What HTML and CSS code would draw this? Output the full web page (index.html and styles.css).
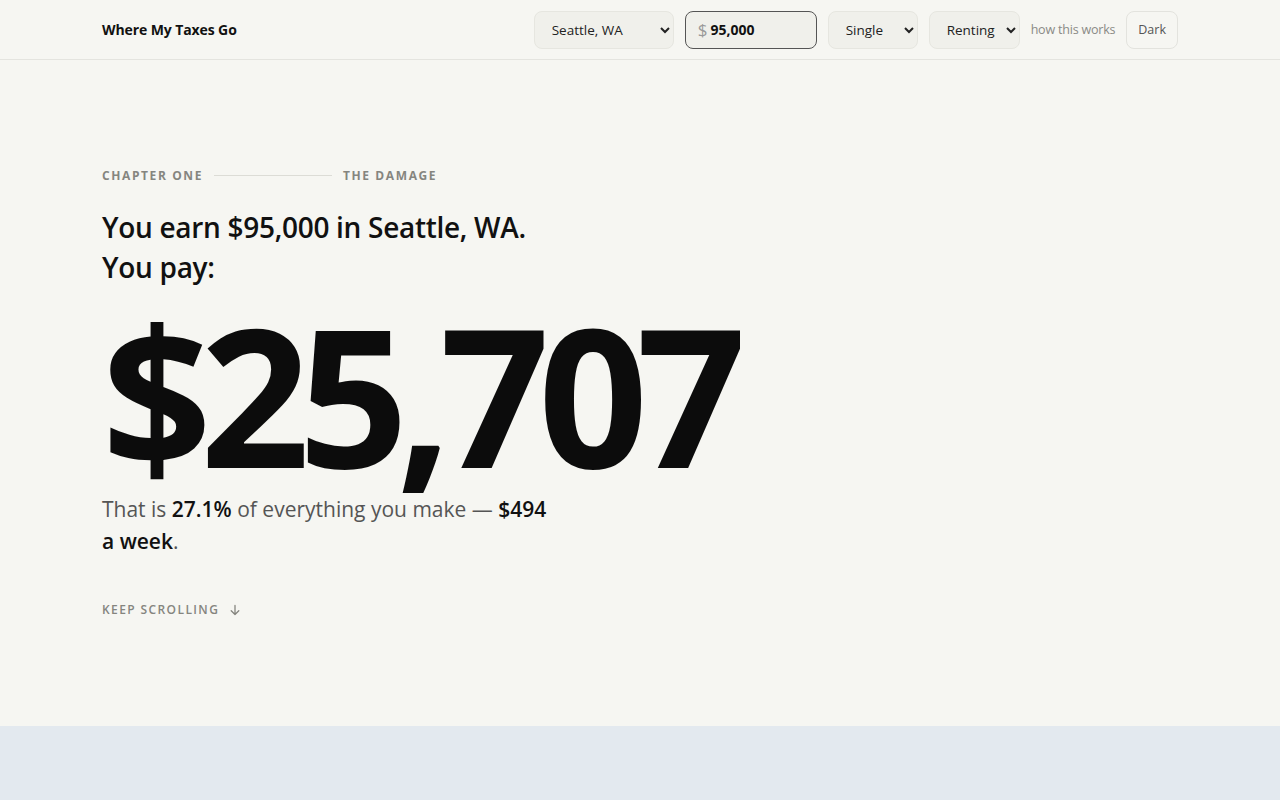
FILE: index.html
```html
<!DOCTYPE html>
<html lang="en">

<head>
    <meta charset="UTF-8">
    <meta name="viewport" content="width=device-width, initial-scale=1.0">
    <title>Where My Taxes Go</title>
    <link rel="stylesheet" href="styles.css">
</head>

<body>
    <header class="topbar">
        <div class="wrap topbar-inner">
            <div class="brand">Where My Taxes Go</div>
            <div class="controls">
                <select class="pick pick-city">
                    <option>Seattle, WA</option>
                </select>
                <label class="income">
                    <span class="income-sign">$</span>
                    <input class="income-val" type="text" value="95,000">
                </label>
                <select class="pick pick-status">
                    <option>Single</option>
                </select>
                <select class="pick pick-home">
                    <option>Renting</option>
                </select>
                <a class="how" href="#">how this works</a>
                <button class="theme">Dark</button>
            </div>
        </div>
    </header>

    <section class="hero">
        <div class="wrap">
            <div class="chapter">
                <span>Chapter One</span>
                <span class="chapter-rule"></span>
                <span>The Damage</span>
            </div>
            <h1 class="lede">You earn $95,000 in Seattle, WA.<br>You pay:</h1>
            <div class="total">$25,707</div>
            <p class="summary">That is <b>27.1%</b> of everything you make — <b>$494 a week</b>.</p>
            <div class="scroll-hint">
                Keep scrolling
                <svg class="arrow" width="12" height="12" viewBox="0 0 12 12">
                    <path d="M6 1.5v9M2.2 6.8 6 10.5l3.8-3.7" fill="none" stroke="currentColor" stroke-width="1.3" stroke-linecap="round" stroke-linejoin="round"/>
                </svg>
            </div>
        </div>
    </section>

    <section class="next"></section>
</body>

</html>
```

FILE: styles.css
```css
body {
    margin: 0;
    background-color: #f6f6f2;
    font-family: 'Open Sans', 'Noto Sans', sans-serif;
    color: #111;
}

.wrap {
    max-width: 1076px;
    margin: 0 auto;
}

/* top bar */
.topbar {
    height: 59px;
    border-bottom: 1px solid #e4e4df;
}
.topbar-inner {
    height: 100%;
    display: flex;
    align-items: center;
    justify-content: space-between;
}
.brand {
    font-size: 14px;
    font-weight: 700;
    letter-spacing: -0.1px;
}
.controls {
    display: flex;
    align-items: center;
    gap: 11px;
}
.pick {
    height: 38px;
    padding: 0 8px 0 13px;
    font-family: inherit;
    font-size: 13.5px;
    color: #222;
    background-color: #f0f0eb;
    border: 1px solid #e6e6e0;
    border-radius: 8px;
}
.pick-city { width: 140px; }
.pick-status { width: 90px; }
.pick-home { width: 91px; }

.income {
    display: flex;
    align-items: center;
    padding-left: 12px;
    box-sizing: border-box;
    width: 132px;
    height: 38px;
    background-color: #f0f0eb;
    border: 1px solid #555;
    border-radius: 8px;
}
.income-sign {
    color: #999;
    font-size: 17px;
    margin-right: 3px;
}
.income-val {
    width: 90px;
    border: none;
    background: transparent;
    font-family: inherit;
    font-size: 14px;
    font-weight: 700;
    color: #111;
    outline: none;
    padding: 0;
}
.how {
    font-size: 12.5px;
    letter-spacing: -0.2px;
    color: #8a8a86;
    text-decoration: none;
}
.theme {
    height: 38px;
    padding: 0 11px;
    font-family: inherit;
    font-size: 12.5px;
    color: #555;
    background: transparent;
    border: 1px solid #e3e3de;
    border-radius: 8px;
}

/* first chapter */
.hero {
    height: 666px;
    padding-top: 107px;
    box-sizing: border-box;
}
.chapter {
    display: flex;
    align-items: center;
    gap: 11px;
    font-size: 12px;
    font-weight: 700;
    letter-spacing: 1.6px;
    text-transform: uppercase;
    color: #85857f;
}
.chapter-rule {
    width: 118px;
    height: 1px;
    background-color: #dcdcd6;
}
.lede {
    margin: 23px 0 0;
    font-size: 28px;
    font-weight: 600;
    line-height: 40px;
    letter-spacing: -0.3px;
}
.total {
    margin: 22px 0 0;
    font-size: 192px;
    font-weight: 700;
    line-height: 170px;
    letter-spacing: -0.06em;
    color: #0c0c0c;
}
.summary {
    max-width: 455px;
    margin: 14px 0 0;
    font-size: 21px;
    line-height: 32px;
    color: #555;
}
.summary b {
    color: #111;
    font-weight: 600;
}
.scroll-hint {
    display: flex;
    align-items: center;
    margin-top: 44px;
    font-size: 12px;
    font-weight: 600;
    letter-spacing: 1.4px;
    text-transform: uppercase;
    color: #85857f;
}
.arrow {
    margin-left: 10px;
}

.next {
    height: 300px;
    background-color: #e3e9ef;
}
```
